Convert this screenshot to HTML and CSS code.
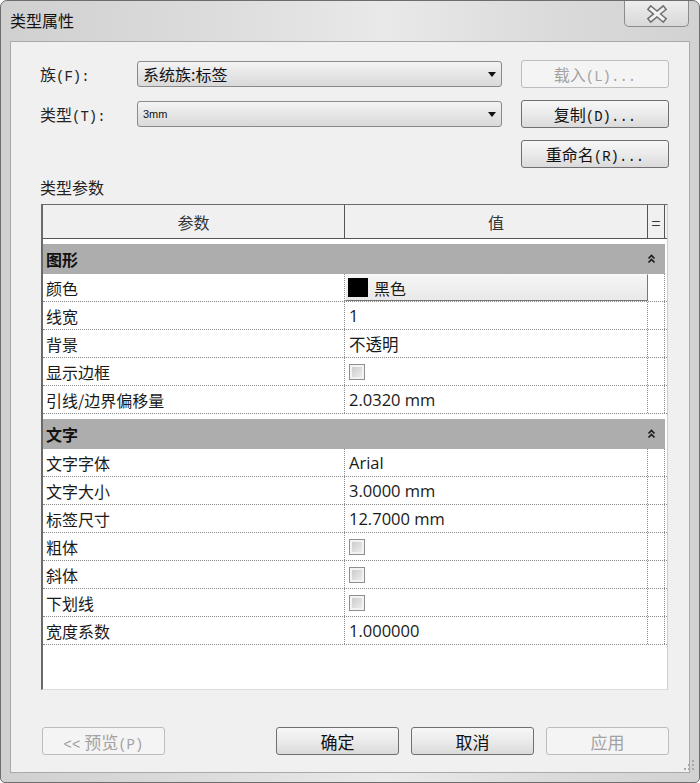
FILE: index.html
```html
<!DOCTYPE html>
<html>
<head>
    <title>类型属性</title>
    <link rel="stylesheet" href="styles.css">
</head>
<body>
    <div class="window">
        <div class="titlebar">
            <span class="title">类型属性</span>
            <div class="close">
                <svg width="22" height="18" viewBox="0 0 22 18">
                    <path d="M5 4 L17 14 M17 4 L5 14" stroke="#6f6f6f" stroke-width="6" stroke-linecap="square"/>
                    <path d="M5 4 L17 14 M17 4 L5 14" stroke="#f2f2f2" stroke-width="3" stroke-linecap="square"/>
                </svg>
            </div>
        </div>

        <div class="panel">
            <div class="form">
                <div class="form-row">
                    <span class="form-label">族<span class="mn">(F):</span></span>
                    <div class="select">系统族:标签<span class="arrow"></span></div>
                    <button class="button button-side" disabled><span>载入<span class="mn">(L)...</span></span></button>
                </div>
                <div class="form-row">
                    <span class="form-label">类型<span class="mn">(T):</span></span>
                    <div class="select select-small">3mm<span class="arrow"></span></div>
                    <button class="button button-side"><span>复制<span class="mn">(D)...</span></span></button>
                </div>
                <div class="form-row">
                    <button class="button button-side"><span>重命名<span class="mn">(R)...</span></span></button>
                </div>
            </div>

            <div class="section-label">类型参数</div>

            <div class="grid">
                <div class="grid-head">
                    <div class="head-cell">参数</div>
                    <div class="head-cell">值</div>
                    <div class="head-cell">=</div>
                </div>
                <div class="gap"></div>
                <div class="group">图形
                    <svg class="chevron" width="9" height="10" viewBox="0 0 9 10">
                        <path d="M1.5 4.5 L4.5 1.5 L7.5 4.5 M1.5 8.5 L4.5 5.5 L7.5 8.5" stroke="#1a1a1a" stroke-width="1.6" fill="none"/>
                    </svg>
                </div>
                <div class="row">
                    <div class="cell">颜色</div>
                    <div class="cell value value-btn">
                        <div class="color-btn"><span class="swatch"></span>黑色</div>
                    </div>
                    <div class="cell"></div>
                </div>
                <div class="row">
                    <div class="cell">线宽</div>
                    <div class="cell value">1</div>
                    <div class="cell"></div>
                </div>
                <div class="row">
                    <div class="cell">背景</div>
                    <div class="cell value">不透明</div>
                    <div class="cell"></div>
                </div>
                <div class="row">
                    <div class="cell">显示边框</div>
                    <div class="cell value"><span class="check"></span></div>
                    <div class="cell"></div>
                </div>
                <div class="row">
                    <div class="cell">引线/边界偏移量</div>
                    <div class="cell value">2.0320 mm</div>
                    <div class="cell"></div>
                </div>
                <div class="gap"></div>
                <div class="group">文字
                    <svg class="chevron" width="9" height="10" viewBox="0 0 9 10">
                        <path d="M1.5 4.5 L4.5 1.5 L7.5 4.5 M1.5 8.5 L4.5 5.5 L7.5 8.5" stroke="#1a1a1a" stroke-width="1.6" fill="none"/>
                    </svg>
                </div>
                <div class="row">
                    <div class="cell">文字字体</div>
                    <div class="cell value">Arial</div>
                    <div class="cell"></div>
                </div>
                <div class="row">
                    <div class="cell">文字大小</div>
                    <div class="cell value">3.0000 mm</div>
                    <div class="cell"></div>
                </div>
                <div class="row">
                    <div class="cell">标签尺寸</div>
                    <div class="cell value">12.7000 mm</div>
                    <div class="cell"></div>
                </div>
                <div class="row">
                    <div class="cell">粗体</div>
                    <div class="cell value"><span class="check"></span></div>
                    <div class="cell"></div>
                </div>
                <div class="row">
                    <div class="cell">斜体</div>
                    <div class="cell value"><span class="check"></span></div>
                    <div class="cell"></div>
                </div>
                <div class="row">
                    <div class="cell">下划线</div>
                    <div class="cell value"><span class="check"></span></div>
                    <div class="cell"></div>
                </div>
                <div class="row">
                    <div class="cell">宽度系数</div>
                    <div class="cell value">1.000000</div>
                    <div class="cell"></div>
                </div>
            </div>

            <div class="footer">
                <button class="button button-wide" disabled><span><span class="mn">&lt;&lt;</span> 预览<span class="mn">(P)</span></span></button>
                <button class="button button-wide button-push">确定</button>
                <button class="button button-wide">取消</button>
                <button class="button button-wide" disabled>应用</button>
            </div>
        </div>

        <svg class="grip" width="12" height="12" viewBox="0 0 12 12">
            <rect x="9" y="1" width="2" height="2" fill="#a8a8a8"/>
            <rect x="5" y="5" width="2" height="2" fill="#a8a8a8"/>
            <rect x="9" y="5" width="2" height="2" fill="#a8a8a8"/>
            <rect x="1" y="9" width="2" height="2" fill="#a8a8a8"/>
            <rect x="5" y="9" width="2" height="2" fill="#a8a8a8"/>
            <rect x="9" y="9" width="2" height="2" fill="#a8a8a8"/>
        </svg>
    </div>
</body>
</html>
```

FILE: styles.css
```css
body {
    margin: 0;
    font-family: "Noto Sans CJK SC", sans-serif;
    background-color: #fff;
    color: #1a1a1a;
}
.window {
    position: relative;
    width: 700px;
    height: 783px;
    box-sizing: border-box;
    border: 1px solid #6d6d6d;
    border-radius: 7px 7px 5px 5px;
    background: linear-gradient(90deg, #d0d0d0 0%, #dcdcdc 30%, #e9e9e9 55%, #dadada 80%, #d2d2d2 100%);
    display: flex;
    flex-direction: column;
}
.titlebar {
    height: 40px;
    display: flex;
    align-items: flex-start;
}
.title {
    margin: 9px 0 0 9px;
    font-size: 16px;
    line-height: 20px;
    color: #111;
}
.close {
    margin-left: auto;
    margin-right: 10px;
    width: 65px;
    height: 26px;
    box-sizing: border-box;
    border: 1px solid #8c8c8c;
    border-top: none;
    border-radius: 0 0 5px 5px;
    background: linear-gradient(#eeeeee, #d8d8d8);
    display: flex;
    align-items: center;
    justify-content: center;
}
.panel {
    flex: 1;
    margin: 0 9px 9px;
    border: 1px solid #a9a9a9;
    background-color: #f0f0f0;
    display: flex;
    flex-direction: column;
}
.mn {
    font-family: "Liberation Mono", monospace;
    font-size: 14px;
}
.form {
    padding: 18px 20px 0 29px;
}
.form-row {
    display: flex;
    align-items: center;
    height: 28px;
    margin-bottom: 12px;
}
.form-row:last-child {
    margin-bottom: 0;
}
.form-label {
    width: 97px;
    font-size: 16px;
    color: #222;
}
.select {
    width: 365px;
    height: 26px;
    box-sizing: border-box;
    border: 1px solid #8a8a8a;
    border-radius: 3px;
    background: linear-gradient(#f4f4f4, #e6e6e6 50%, #d9d9d9);
    display: flex;
    align-items: center;
    padding-left: 5px;
    font-size: 16px;
    color: #111;
}
.select-small {
    font-family: "Liberation Sans", sans-serif;
    font-size: 11px;
}
.arrow {
    margin-left: auto;
    margin-right: 5px;
    width: 0;
    height: 0;
    border-left: 4.5px solid transparent;
    border-right: 4.5px solid transparent;
    border-top: 5px solid #111;
}
.button {
    height: 28px;
    box-sizing: border-box;
    border: 1px solid #707070;
    border-radius: 3px;
    background: linear-gradient(#f6f6f6, #ebebeb 50%, #dadada);
    font-family: "Noto Sans CJK SC", sans-serif;
    font-size: 16px;
    color: #111;
    padding: 0;
    display: flex;
    align-items: center;
    justify-content: center;
}
.button:disabled {
    border-color: #bdbdbd;
    background: #f4f4f4;
    color: #a2a2a2;
}
.button-side {
    margin-left: auto;
    width: 148px;
}
.section-label {
    margin: 9px 0 7px 29px;
    font-size: 16px;
    line-height: 20px;
    color: #222;
}
.grid {
    margin-left: 30px;
    width: 627px;
    height: 486px;
    box-sizing: border-box;
    border-top: 1px solid #6a6a6a;
    border-left: 2px solid #6a6a6a;
    border-right: 1px solid #cfcfcf;
    border-bottom: 1px solid #dcdcdc;
    background-color: #fff;
}
.grid-head {
    display: grid;
    grid-template-columns: 302px 303px 17px;
    height: 34px;
    box-sizing: border-box;
    border-bottom: 1px solid #555;
    background-color: #f0f0f0;
}
.head-cell {
    border-right: 1px solid #555;
    display: flex;
    align-items: center;
    justify-content: center;
    font-size: 16px;
    color: #333;
}
.gap {
    height: 5px;
}
.group {
    width: 622px;
    height: 30px;
    box-sizing: border-box;
    padding-left: 3px;
    background-color: #adadad;
    display: flex;
    align-items: center;
    font-size: 16px;
    font-weight: bold;
    color: #111;
}
.chevron {
    margin-left: auto;
    margin-right: 9px;
}
.row {
    display: grid;
    grid-template-columns: 302px 303px 17px;
    height: 28px;
    box-sizing: border-box;
    border-bottom: 1px dotted #8a8a8a;
}
.cell {
    border-right: 1px dotted #8a8a8a;
    display: flex;
    align-items: center;
    padding-left: 3px;
    font-size: 16px;
    white-space: nowrap;
    overflow: hidden;
}
.value {
    padding-left: 4px;
    font-family: "Open Sans", "Noto Sans CJK SC", sans-serif;
    font-size: 16.5px;
}
.value-btn {
    padding-left: 0;
    border-right: none;
}
.color-btn {
    width: 303px;
    height: 27px;
    box-sizing: border-box;
    border: 1px solid #fafafa;
    border-right-color: #777;
    border-bottom-color: #777;
    background: linear-gradient(#f6f6f6, #e8e8e8);
    display: flex;
    align-items: center;
    font-family: "Noto Sans CJK SC", sans-serif;
    font-size: 16px;
}
.swatch {
    width: 20px;
    height: 19px;
    margin: 0 6px 0 2px;
    background-color: #000;
}
.check {
    width: 16px;
    height: 16px;
    box-sizing: border-box;
    border: 1px solid #8f8f8f;
    background: linear-gradient(135deg, #c6c6c6, #f2f2f2);
    box-shadow: inset 0 0 0 2px #f3f3f3;
}
.footer {
    margin-top: auto;
    display: flex;
    gap: 12px;
    padding: 0 20px 17px 31px;
}
.button-wide {
    width: 123px;
    font-size: 17px;
}
.button-push {
    margin-left: auto;
}
.grip {
    position: absolute;
    right: 4px;
    bottom: 11px;
}
```
